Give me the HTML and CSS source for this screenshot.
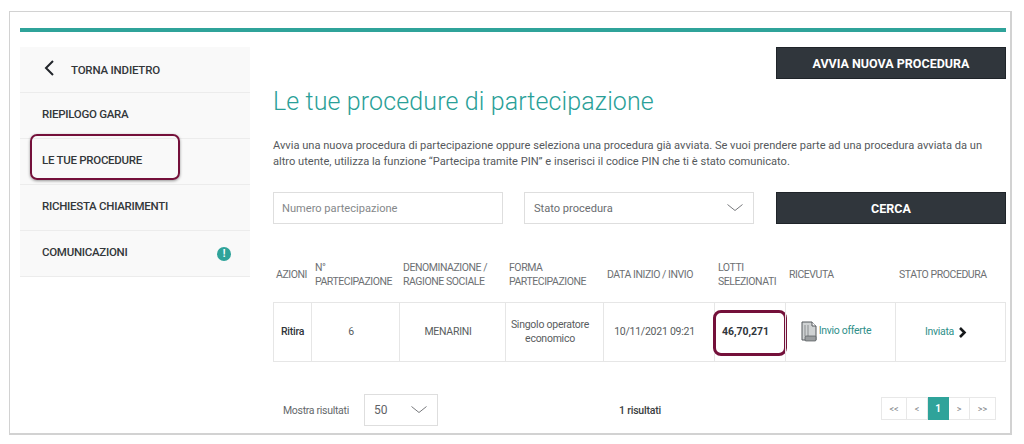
FILE: index.html
```html
<!DOCTYPE html>
<html lang="it">
<head>
<meta charset="utf-8">
<title>Le tue procedure di partecipazione</title>
<link rel="stylesheet" href="styles.css">
</head>
<body>
<div class="frame">
  <div class="topbar"></div>
  <div class="columns">
    <nav class="side">
      <a class="side-item back"><svg class="back-icon" width="12" height="18" viewBox="0 0 12 18"><path d="M10 2 3 9l7 7" fill="none" stroke="#22262b" stroke-width="2"/></svg>TORNA INDIETRO</a>
      <a class="side-item">RIEPILOGO GARA</a>
      <a class="side-item current">LE TUE PROCEDURE<span class="mark mark-side"></span></a>
      <a class="side-item">RICHIESTA CHIARIMENTI</a>
      <a class="side-item">COMUNICAZIONI<span class="badge">!</span></a>
    </nav>
    <main class="content">
      <div class="top-action"><button class="btn btn-new">AVVIA NUOVA PROCEDURA</button></div>
      <h1>Le tue procedure di partecipazione</h1>
      <p class="intro">Avvia una nuova procedura di partecipazione oppure seleziona una procedura già avviata. Se vuoi prendere parte ad una procedura avviata da un<br>altro utente, utilizza la funzione “Partecipa tramite PIN” e inserisci il codice PIN che ti è stato comunicato.</p>
      <div class="filters">
        <div class="field field-num">Numero partecipazione</div>
        <div class="field field-state">Stato procedura<svg class="chev" width="16" height="8" viewBox="0 0 16 8"><path d="M.5.5l7.500 6 7.500-6" fill="none" stroke="#77797c" stroke-width="1"/></svg></div>
        <button class="btn btn-search">CERCA</button>
      </div>
      <div class="grid heads">
        <div class="head head-first">AZIONI</div>
        <div class="head">N°<br>PARTECIPAZIONE</div>
        <div class="head">DENOMINAZIONE /<br>RAGIONE SOCIALE</div>
        <div class="head">FORMA<br>PARTECIPAZIONE</div>
        <div class="head">DATA INIZIO / INVIO</div>
        <div class="head">LOTTI<br>SELEZIONATI</div>
        <div class="head">RICEVUTA</div>
        <div class="head">STATO PROCEDURA</div>
      </div>
      <div class="grid row">
        <div class="cell strong">Ritira</div>
        <div class="cell">6</div>
        <div class="cell">MENARINI</div>
        <div class="cell">Singolo operatore<br>economico</div>
        <div class="cell">10/11/2021 09:21</div>
        <div class="cell lots">46,70,271<span class="mark mark-cell"></span></div>
        <div class="cell receipt"><svg width="16" height="21" viewBox="0 0 16 21"><path d="M1 1h10l4 4v14H1z" fill="#cfd2d3" stroke="#55595c"/><path d="M11 1v4h4" fill="#fff" stroke="#55595c"/><path d="M4 4v11M7 4v11" stroke="#8b8e90"/><rect x="4" y="15" width="11" height="5" rx="1" fill="#9a9d9f" stroke="#55595c" stroke-width=".7"/></svg><span class="link">Invio offerte</span></div>
        <div class="cell"><span class="link">Inviata</span><svg width="9" height="11" viewBox="0 0 9 11"><path d="M2 1l4.500 4.500L2 10" fill="none" stroke="#15181a" stroke-width="2.600"/></svg></div>
      </div>
      <div class="pager-row">
        <span class="show-label">Mostra risultati</span>
        <div class="page-size">50<svg width="16" height="8" viewBox="0 0 16 8"><path d="M.5.5l7.500 6 7.500-6" fill="none" stroke="#77797c" stroke-width="1"/></svg></div>
        <span class="count">1 risultati</span>
        <div class="pager">
          <span class="pg pg-wide">&lt;&lt;</span><span class="pg">&lt;</span><span class="pg active">1</span><span class="pg">&gt;</span><span class="pg pg-wide">&gt;&gt;</span>
        </div>
      </div>
    </main>
  </div>
</div>
</body>
</html>
```
FILE: styles.css
```css
* { box-sizing: border-box; }
html, body { margin: 0; background: #fff; }
body {
  width: 1024px;
  height: 444px;
  padding: 11px 0 0 9px;
  font-family: "Roboto", "Liberation Sans", sans-serif;
  color: #5f6366;
  overflow: hidden;
}
.frame {
  width: 1003px;
  height: 424px;
  border: 1px solid #d2d2d2;
  border-bottom-width: 2px;
  border-right-width: 2px;
  padding: 16px 4px 0 10px;
}
.topbar { height: 4px; background: #2fa39a; }
.columns { display: flex; margin-top: 15px; }

.side { width: 230px; flex: none; margin-right: 23px; }
.side-item {
  position: relative;
  display: flex;
  align-items: center;
  height: 46px;
  padding-left: 22px;
  padding-bottom: 4px;
  background: #f9f9f9;
  border-bottom: 1px solid #ececec;
  font-size: 11.500px;
  font-weight: 500;
  letter-spacing: -.28px;
  color: #33373a;
}
.back { padding-left: 23px; padding-bottom: 0; letter-spacing: -.2px; }
.back-icon { margin-right: 16px; margin-bottom: 3px; }
.badge {
  position: absolute;
  left: 197px;
  top: 16px;
  width: 14px;
  height: 14px;
  border-radius: 50%;
  background: #2fa39a;
  color: #fff;
  font-size: 10px;
  font-weight: 700;
  line-height: 14px;
  text-align: center;
}
.mark { position: absolute; border: 2px solid #74103a; }
.mark-side {
  left: 10px;
  top: -5px;
  width: 150px;
  height: 46px;
  border-radius: 7px;
  box-shadow: 0 1px 3px rgba(0,0,0,.4);
}
.mark-cell { left: -2px; top: 7px; width: 74px; height: 46px; border-width: 3px; border-radius: 8px; }

.content { width: 733px; flex: none; }
.top-action { display: flex; justify-content: flex-end; }
.btn {
  display: block;
  border: 1px solid #1f2429;
  background: #30363c;
  color: #fff;
  font-family: inherit;
  font-weight: 700;
  font-size: 12.500px;
  padding: 0;
}
.btn-new { width: 230px; height: 32px; }
h1 {
  margin: 5px 0 0;
  font-size: 25px;
  line-height: 36px;
  font-weight: 300;
  letter-spacing: .12px;
  color: #2a9f98;
}
.intro {
  margin: 18px 0 0;
  font-size: 11.100px;
  line-height: 16px;
  color: #55595c;
  white-space: nowrap;
}
.filters { display: flex; margin-top: 22px; }
.field {
  display: flex;
  align-items: center;
  justify-content: space-between;
  height: 32px;
  border: 1px solid #dedede;
  padding: 0 10px 0 8px;
  font-size: 11.100px;
  color: #85888a;
}
.field-num { width: 230px; margin-right: 21px; }
.field-state { width: 230px; margin-right: 22px; padding-left: 9px; color: #6a6d70; }
.btn-search { width: 230px; height: 32px; }

.grid {
  display: grid;
  grid-template-columns: 38px 88px 106px 98px 111px 71px 110px 111px;
}
.heads { height: 51px; margin-top: 27px; }
.head {
  display: flex;
  align-items: center;
  padding: 0 0 4px 4px;
  font-size: 10.500px;
  line-height: 14px;
  color: #6d7073;
  white-space: nowrap;
  letter-spacing: -.45px;
}
.head-first { padding-left: 3px; }
.row { height: 60px; border-top: 1px solid #e6e6e6; border-bottom: 1px solid #e6e6e6; }
.cell {
  position: relative;
  display: flex;
  align-items: center;
  justify-content: center;
  gap: 4px;
  padding-right: 9px;
  border-left: 1px solid #e6e6e6;
  font-size: 10.500px;
  line-height: 14px;
  text-align: center;
  color: #595d60;
  white-space: nowrap;
  letter-spacing: -.25px;
}
.cell:last-child { border-right: 1px solid #e6e6e6; }
.strong { padding-right: 0; font-weight: 500; color: #30353a; }
.lots { font-weight: 700; color: #30353a; letter-spacing: -.05px; }
.receipt { gap: 2px; padding-bottom: 2px; }
.link { color: #2f8f89; font-weight: 400; letter-spacing: -.3px; }

.pager-row { display: flex; align-items: center; height: 32px; margin-top: 32px; font-size: 10.500px; }
.show-label { margin-left: 10px; width: 81px; flex: none; color: #64686b; letter-spacing: -.3px; }
.page-size {
  display: flex;
  align-items: center;
  justify-content: space-between;
  width: 74px;
  height: 32px;
  flex: none;
  border: 1px solid #dedede;
  padding: 0 10px 0 9px;
  font-size: 12px;
  color: #5f6366;
}
.count { margin-left: 181px; font-weight: 500; color: #3a3e41; width: 262px; flex: none; letter-spacing: -.2px; }
.pager { display: flex; height: 23px; margin-bottom: 3px; }
.pg {
  display: flex;
  align-items: center;
  justify-content: center;
  width: 21px;
  border: 1px solid #e8e8e8;
  border-left-width: 0;
  font-size: 9px;
  color: #85888a;
}
.pg:first-child { border-left-width: 1px; }
.pg-wide { width: 26px; }
.active { background: #2fa39a; border-color: #2fa39a; color: #fff; font-weight: 700; font-size: 10px; }
```
